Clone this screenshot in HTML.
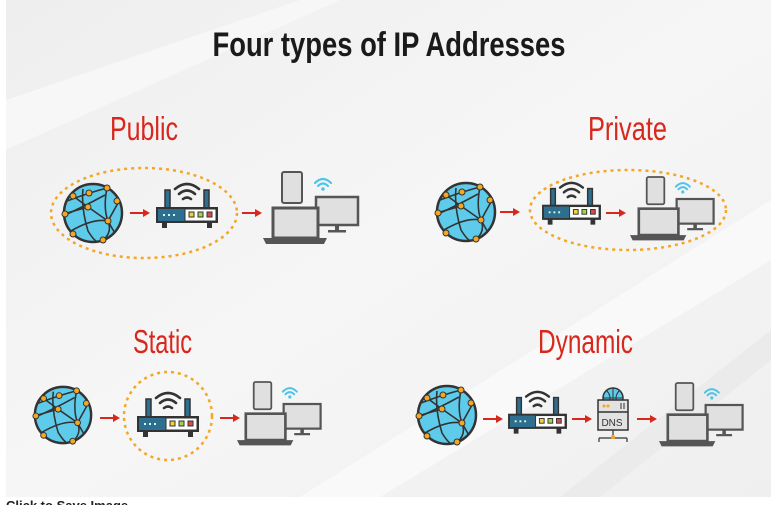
<!DOCTYPE html>
<html><head><meta charset="utf-8"><style>
html,body{margin:0;padding:0;background:#fff;width:779px;height:505px;overflow:hidden}
svg{display:block}
.t{font-family:"Liberation Sans",sans-serif}
</style></head><body>
<svg width="779" height="505" viewBox="0 0 779 505" xmlns="http://www.w3.org/2000/svg">
<defs>
<linearGradient id="bg" x1="0" y1="0" x2="1" y2="1">
<stop offset="0" stop-color="#eeeeee"/><stop offset="0.5" stop-color="#f6f6f6"/><stop offset="1" stop-color="#efefef"/>
</linearGradient>
<clipPath id="gc"><circle r="28"/></clipPath>
<g id="globe">
<circle r="29" fill="#5ecbea" stroke="#333" stroke-width="2.5"/>
<g fill="none" stroke="#333" stroke-width="1.6" clip-path="url(#gc)">
<path d="M-26,-12 Q-5,-20 14,-25"/>
<path d="M-28,2 Q-10,-6 12,-18"/>
<path d="M-10,-24 Q-12,-5 -5,18 Q0,26 3,28"/>
<path d="M14,-25 Q10,-5 15,8 Q20,20 8,29"/>
<path d="M-22,18 Q0,5 15,8 L25,-10"/>
<path d="M-5,-6 L15,8 L24,24"/>
<path d="M-20,-17 L-5,-6 L-26,0"/>
</g>
<g fill="#f5a623" stroke="#333" stroke-width="1">
<circle cx="-20" cy="-17" r="3"/><circle cx="-4" cy="-20" r="3"/><circle cx="14" cy="-25" r="3"/>
<circle cx="24" cy="-12" r="3"/><circle cx="-5" cy="-6" r="3"/><circle cx="-28" cy="1" r="3"/>
<circle cx="15" cy="8" r="3"/><circle cx="-20" cy="21" r="3"/><circle cx="10" cy="27" r="3"/>
</g>
</g>
<g id="router">
<g fill="none" stroke="#333" stroke-width="2.6" stroke-linecap="round">
<path d="M18,8 Q30,-2 42,8"/><path d="M22,13 Q30,6 38,13"/><path d="M26,18 Q30,15 34,18"/>
</g>
<rect x="8" y="9" width="5" height="19" fill="#2e6e8e" stroke="#333" stroke-width="1.5"/>
<rect x="47" y="9" width="5" height="19" fill="#2e6e8e" stroke="#333" stroke-width="1.5"/>
<rect x="5" y="40" width="5" height="7" fill="#333"/><rect x="50" y="40" width="5" height="7" fill="#333"/>
<rect x="0" y="27" width="60" height="14" fill="#2e6e8e" stroke="#333" stroke-width="2"/>
<rect x="28" y="28" width="31" height="12" fill="#fff" stroke="#333" stroke-width="1"/>
<rect x="32" y="31" width="5" height="5" fill="#f2d13a" stroke="#333" stroke-width="1"/>
<rect x="41" y="31" width="5" height="5" fill="#a8d14a" stroke="#333" stroke-width="1"/>
<rect x="50" y="31" width="5" height="5" fill="#e04848" stroke="#333" stroke-width="1"/>
<g fill="#cfe"><rect x="6" y="33" width="2" height="2"/><rect x="11" y="33" width="2" height="2"/><rect x="16" y="33" width="2" height="2"/></g>
</g>
<g id="devices">
<rect x="19" y="0" width="20" height="31" rx="2" fill="#e0e0e0" stroke="#555" stroke-width="2"/>
<rect x="53" y="25" width="42" height="28" fill="#e0e0e0" stroke="#555" stroke-width="2.5"/>
<rect x="72" y="53" width="4" height="5" fill="#555"/><rect x="65" y="58" width="18" height="2.5" fill="#555"/>
<rect x="10" y="36" width="45" height="30" fill="#e0e0e0" stroke="#555" stroke-width="3"/>
<path d="M0,66 H64 L61,72 H3 Z" fill="#555"/>
<g fill="none" stroke="#4fc3e8" stroke-width="2.2" stroke-linecap="round">
<path d="M52,11 Q60,3 68,11"/><path d="M55,14 Q60,9 65,14"/>
</g>
<circle cx="60" cy="17" r="1.8" fill="#4fc3e8"/>
</g>
<g id="arrow"><path d="M0,0 H14" stroke="#d8281d" stroke-width="2"/><path d="M13,-4 L20,0 L13,4 Z" fill="#d8281d"/></g>
</defs>
<rect x="6" y="0" width="765" height="497" fill="url(#bg)"/>
<path d="M6,100 L300,0 L340,0 L6,150 Z" fill="#ffffff" opacity="0.45"/>
<path d="M300,497 L771,200 L771,260 L380,497 Z" fill="#ffffff" opacity="0.5"/>
<path d="M560,497 L771,330 L771,360 L600,497 Z" fill="#e6e6e6" opacity="0.5"/>
<text class="t" x="389" y="56" text-anchor="middle" font-size="34" font-weight="bold" fill="#1a1a1a" textLength="353" lengthAdjust="spacingAndGlyphs">Four types of IP Addresses</text>
<g class="t" fill="#d8281d" font-size="33">
<text x="110" y="140" textLength="68" lengthAdjust="spacingAndGlyphs">Public</text>
<text x="588" y="140" textLength="79" lengthAdjust="spacingAndGlyphs">Private</text>
<text x="133" y="353" textLength="59" lengthAdjust="spacingAndGlyphs">Static</text>
<text x="538" y="353" textLength="95" lengthAdjust="spacingAndGlyphs">Dynamic</text>
</g>
<g fill="none" stroke="#f5a623" stroke-width="2.5" stroke-dasharray="3 4">
<ellipse cx="144" cy="213" rx="93" ry="45"/>
<ellipse cx="628" cy="210" rx="98" ry="40"/>
<circle cx="168" cy="416" r="44"/>
</g>
<use href="#globe" x="93" y="213"/>
<use href="#arrow" x="130" y="213"/>
<use href="#router" x="157" y="181"/>
<use href="#arrow" x="242" y="213"/>
<use href="#devices" x="263" y="172"/>

<use href="#globe" transform="translate(466,212)"/>
<use href="#arrow" x="500" y="212"/>
<use href="#router" transform="translate(543,180) scale(0.95)"/>
<use href="#arrow" x="606" y="213"/>
<use href="#devices" transform="translate(630,177) scale(0.88)"/>

<use href="#globe" transform="translate(63,415) scale(0.97)"/>
<use href="#arrow" x="100" y="418"/>
<use href="#router" x="138" y="390"/>
<use href="#arrow" x="220" y="418"/>
<use href="#devices" transform="translate(237,382) scale(0.88)"/>

<use href="#globe" x="447" y="415"/>
<use href="#arrow" x="483" y="419"/>
<use href="#router" transform="translate(509,389) scale(0.95)"/>
<use href="#arrow" x="572" y="419"/>
<g transform="translate(596,388)">
<circle cx="17" cy="10" r="10" fill="#5ecbea" stroke="#333" stroke-width="1.5"/>
<path d="M7,10 H27 M17,0 V20 M11,3 Q17,10 11,17 M23,3 Q17,10 23,17" stroke="#333" stroke-width="1" fill="none"/>
<rect x="2" y="12" width="30" height="30" fill="#e2e2e2" stroke="#333" stroke-width="1.5"/>
<path d="M2,24 H32" stroke="#333" stroke-width="1.5"/>
<circle cx="8" cy="18" r="1.5" fill="#f5a623"/><circle cx="12" cy="18" r="1.5" fill="#f5a623"/>
<path d="M25,15 V21 M28,15 V21" stroke="#333"/>
<text class="t" x="16" y="38" text-anchor="middle" font-size="10" fill="#333">DNS</text>
<path d="M17,42 V50 M3,50 H31 M3,50 V54 M31,50 V54" stroke="#333" stroke-width="1.2" fill="none"/>
<circle cx="17" cy="49" r="2" fill="#f5a623"/>
</g>
<use href="#arrow" x="637" y="419"/>
<use href="#devices" transform="translate(659,383) scale(0.88)"/>
<text class="t" x="6" y="510" font-size="13" font-weight="bold" fill="#222">Click to Save Image</text>
</svg>
</body></html>
